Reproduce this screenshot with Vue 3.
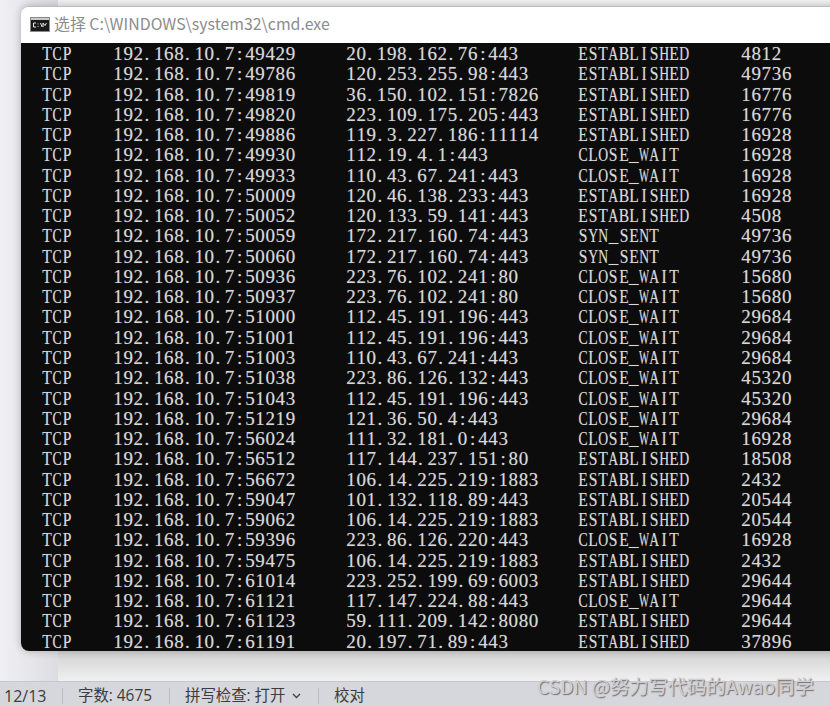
<script setup>
const rows = [
  ['192.168.10.7:49429', '20.198.162.76:443', 'ESTABLISHED', '4812'],
  ['192.168.10.7:49786', '120.253.255.98:443', 'ESTABLISHED', '49736'],
  ['192.168.10.7:49819', '36.150.102.151:7826', 'ESTABLISHED', '16776'],
  ['192.168.10.7:49820', '223.109.175.205:443', 'ESTABLISHED', '16776'],
  ['192.168.10.7:49886', '119.3.227.186:11114', 'ESTABLISHED', '16928'],
  ['192.168.10.7:49930', '112.19.4.1:443', 'CLOSE_WAIT', '16928'],
  ['192.168.10.7:49933', '110.43.67.241:443', 'CLOSE_WAIT', '16928'],
  ['192.168.10.7:50009', '120.46.138.233:443', 'ESTABLISHED', '16928'],
  ['192.168.10.7:50052', '120.133.59.141:443', 'ESTABLISHED', '4508'],
  ['192.168.10.7:50059', '172.217.160.74:443', 'SYN_SENT', '49736'],
  ['192.168.10.7:50060', '172.217.160.74:443', 'SYN_SENT', '49736'],
  ['192.168.10.7:50936', '223.76.102.241:80', 'CLOSE_WAIT', '15680'],
  ['192.168.10.7:50937', '223.76.102.241:80', 'CLOSE_WAIT', '15680'],
  ['192.168.10.7:51000', '112.45.191.196:443', 'CLOSE_WAIT', '29684'],
  ['192.168.10.7:51001', '112.45.191.196:443', 'CLOSE_WAIT', '29684'],
  ['192.168.10.7:51003', '110.43.67.241:443', 'CLOSE_WAIT', '29684'],
  ['192.168.10.7:51038', '223.86.126.132:443', 'CLOSE_WAIT', '45320'],
  ['192.168.10.7:51043', '112.45.191.196:443', 'CLOSE_WAIT', '45320'],
  ['192.168.10.7:51219', '121.36.50.4:443', 'CLOSE_WAIT', '29684'],
  ['192.168.10.7:56024', '111.32.181.0:443', 'CLOSE_WAIT', '16928'],
  ['192.168.10.7:56512', '117.144.237.151:80', 'ESTABLISHED', '18508'],
  ['192.168.10.7:56672', '106.14.225.219:1883', 'ESTABLISHED', '2432'],
  ['192.168.10.7:59047', '101.132.118.89:443', 'ESTABLISHED', '20544'],
  ['192.168.10.7:59062', '106.14.225.219:1883', 'ESTABLISHED', '20544'],
  ['192.168.10.7:59396', '223.86.126.220:443', 'CLOSE_WAIT', '16928'],
  ['192.168.10.7:59475', '106.14.225.219:1883', 'ESTABLISHED', '2432'],
  ['192.168.10.7:61014', '223.252.199.69:6003', 'ESTABLISHED', '29644'],
  ['192.168.10.7:61121', '117.147.224.88:443', 'CLOSE_WAIT', '29644'],
  ['192.168.10.7:61123', '59.111.209.142:8080', 'ESTABLISHED', '29644'],
  ['192.168.10.7:61191', '20.197.71.89:443', 'ESTABLISHED', '37896'],
]
const colNames = ['proto', 'local', 'remote', 'state', 'pid']
function cellClass(c) {
  if (c === 'W') return 'w'
  if ('AHDOYNC'.includes(c)) return 'wide'
  if ('TEBLPSI'.includes(c)) return 'cap'
  if (c === '.') return 'punct'
  return ''
}
</script>

<template>
  <div class="screen">
    <div class="desk">
      <div class="margin"></div>
      <div class="page"></div>
    </div>
    <div class="status">
      <span class="cell first">12/13</span>
      <span class="cell words">字数: 4675</span>
      <span class="cell spell">拼写检查: 打开
        <svg class="chev" width="9" height="6" viewBox="0 0 9 6"><path d="M1 1l3.5 3.5L8 1" fill="none" stroke="#444" stroke-width="1.4"/></svg>
      </span>
      <span class="cell last">校对</span>
    </div>
    <div class="watermark">CSDN @努力写代码的Awao同学</div>
    <div class="window">
      <div class="titlebar">
        <svg class="appicon" width="20" height="15" viewBox="0 0 20 15">
          <rect x="0.5" y="0.5" width="19" height="14" fill="#1a1a1a" stroke="#8a8a8a"/>
          <rect x="1" y="1" width="18" height="2" fill="#c8c8c8"/>
          <path d="M6 6H3.5v4H6M8 6.5v.8M8 9.2v.8M10.5 6l1.6 4M13 10V6l2 2.5 1.5-2.5" fill="none" stroke="#e8e8e8" stroke-width="1"/>
        </svg>
        <span class="title">选择 C:\WINDOWS\system32\cmd.exe</span>
      </div>
      <div class="console">
        <div v-for="r in rows" :key="r[0]" class="row">
          <span v-for="(text, i) in ['TCP', ...r]" :key="i" :class="colNames[i]" class="col">
            <span v-for="(c, j) in text" :key="j" class="ch" :class="cellClass(c)">{{ c }}</span>
          </span>
        </div>
      </div>
    </div>
  </div>
</template>

<style>
html, body { margin: 0; background: #e6e6ec; }
</style>

<style scoped>
.screen {
  position: relative;
  width: 830px;
  height: 706px;
  overflow: hidden;
  display: flex;
  flex-direction: column;
  font-family: "Noto Sans CJK SC", "Noto Sans", sans-serif;
}
.desk {
  flex: 1;
  display: flex;
  min-height: 0;
}
.margin {
  width: 58px;
  background: linear-gradient(90deg, #f0f0f4, #dcdce2);
}
.page {
  flex: 1;
  background: linear-gradient(180deg, #f2f2f2 6px, #d2d2d2 7px, #d2d2d2 651px, #f0f0f0 681px);
}
.status {
  height: 25px;
  flex: none;
  background: #d6d6dd;
  border-top: 1px solid #c6c6cc;
  box-sizing: border-box;
  display: flex;
  align-items: center;
  padding-top: 3px;
  font-family: "Open Sans", "Noto Sans CJK SC", sans-serif;
  font-size: 15.4px;
  color: #3c3c3c;
}
.cell {
  height: 16px;
  line-height: 16px;
  display: flex;
  align-items: center;
  box-sizing: border-box;
  border-right: 1px solid #bcbcc2;
  white-space: nowrap;
}
.first { width: 63px; padding-left: 4px; font-size: 16px; }
.words { width: 107px; padding-left: 15px; }
.spell { width: 149px; padding-left: 15px; }
.chev { margin-left: 7px; }
.last { border-right: 0; padding-left: 15px; }
.watermark {
  position: absolute;
  left: 537px;
  top: 674px;
  font-size: 19.3px;
  line-height: 24px;
  white-space: nowrap;
  color: #cfcfd3;
  text-shadow: 1px 1px 1px #6e6e6e;
}
.window {
  position: absolute;
  left: 21px;
  top: 6px;
  width: 830px;
  height: 645px;
  border-radius: 8px 0 0 8px;
  overflow: hidden;
  border-top: 1px solid #bdbdbd;
  box-sizing: border-box;
  box-shadow: 0 0 8px rgba(0, 0, 0, 0.25);
}
.titlebar {
  height: 36px;
  background: #fff;
  display: flex;
  align-items: center;
  padding-left: 9px;
  padding-bottom: 4px;
  box-sizing: border-box;
}
.appicon { flex: none; margin-top: 3px; }
.title {
  margin-left: 4px;
  font-size: 15.9px;
  color: #8c8c8c;
  white-space: nowrap;
}
.console {
  height: 608px;
  padding-top: 1px;
  box-sizing: border-box;
  background: #0c0c0c;
  color: #d8d8d8;
  font-family: "Liberation Serif", "DejaVu Serif", serif;
  font-size: 19px;
  line-height: 20.27px;
  text-shadow: 0 0 1px rgba(200, 200, 200, 0.45);
}
.row {
  display: flex;
  height: 20.27px;
}
.col { display: flex; flex: none; }
.proto { margin-left: 21px; width: 71px; }
.local { width: 233px; }
.remote { width: 232px; }
.state { width: 163px; }
.ch {
  display: flex;
  flex: none;
  justify-content: center;
  width: 10.15px;
}
.cap { transform: scaleX(0.82); }
.wide { transform: scaleX(0.72); }
.w { transform: scaleX(0.56); }
.punct { justify-content: flex-start; padding-left: 1px; box-sizing: border-box; }
</style>
